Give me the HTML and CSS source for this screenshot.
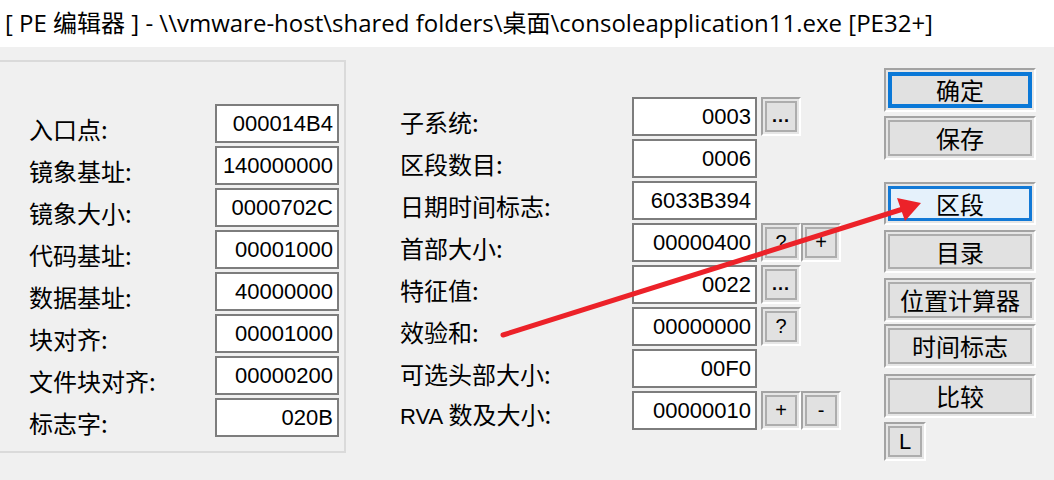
FILE: index.html
```html
<!DOCTYPE html>
<html lang="zh">
<head>
<meta charset="utf-8">
<link rel="stylesheet" href="styles.css">
</head>
<body>
<div class="title">[ PE 编辑器 ] - \\vmware-host\shared folders\桌面\consoleapplication11.exe [PE32+]</div>
<div class="main">
  <div class="group">
    <div class="rows">
      <div class="row"><span class="lbl">入口点:</span><span class="box">000014B4</span></div>
      <div class="row"><span class="lbl">镜象基址:</span><span class="box">140000000</span></div>
      <div class="row"><span class="lbl">镜象大小:</span><span class="box">0000702C</span></div>
      <div class="row"><span class="lbl">代码基址:</span><span class="box">00001000</span></div>
      <div class="row"><span class="lbl">数据基址:</span><span class="box">40000000</span></div>
      <div class="row"><span class="lbl">块对齐:</span><span class="box">00001000</span></div>
      <div class="row"><span class="lbl">文件块对齐:</span><span class="box">00000200</span></div>
      <div class="row"><span class="lbl">标志字:</span><span class="box">020B</span></div>
    </div>
  </div>
  <div class="mid">
    <div class="rows">
      <div class="row"><span class="lbl">子系统:</span><span class="box">0003</span><span class="sbtn"><span class="in dots">...</span></span></div>
      <div class="row"><span class="lbl">区段数目:</span><span class="box">0006</span></div>
      <div class="row"><span class="lbl">日期时间标志:</span><span class="box">6033B394</span></div>
      <div class="row"><span class="lbl">首部大小:</span><span class="box">00000400</span><span class="sbtn"><span class="in">?</span></span><span class="sbtn"><span class="in">+</span></span></div>
      <div class="row"><span class="lbl">特征值:</span><span class="box">0022</span><span class="sbtn"><span class="in dots">...</span></span></div>
      <div class="row"><span class="lbl">效验和:</span><span class="box">00000000</span><span class="sbtn"><span class="in">?</span></span></div>
      <div class="row"><span class="lbl">可选头部大小:</span><span class="box">00F0</span></div>
      <div class="row"><span class="lbl"><span><span class="lat">RVA</span> 数及大小:</span></span><span class="box">00000010</span><span class="sbtn"><span class="in">+</span></span><span class="sbtn"><span class="in">-</span></span></div>
    </div>
  </div>
  <div class="side">
    <div class="btn b1"><span class="in focus">确定</span></div>
    <div class="btn b2"><span class="in">保存</span></div>
    <div class="btn b3"><span class="in hot">区段</span></div>
    <div class="btn b4"><span class="in">目录</span></div>
    <div class="btn b5"><span class="in">位置计算器</span></div>
    <div class="btn b6"><span class="in">时间标志</span></div>
    <div class="btn b7"><span class="in">比较</span></div>
    <div class="btn b8"><span class="in lat">L</span></div>
  </div>
</div>
<svg class="arrow" width="1054" height="480" viewBox="0 0 1054 480">
  <line x1="503" y1="335" x2="903" y2="209" stroke="#ec2229" stroke-width="5" stroke-linecap="round"/>
  <polygon points="921,203 897,198 905,221" fill="#ec2229"/>
</svg>
</body>
</html>
```
FILE: styles.css
```css
html, body {
  margin: 0;
  padding: 0;
}
body {
  width: 1054px;
  height: 480px;
  overflow: hidden;
  background: #f0f0f0;
  font-family: "Noto Sans CJK SC", "Noto Sans", sans-serif;
  color: #000;
  position: relative;
}
.title {
  height: 47px;
  background: #fff;
  box-sizing: border-box;
  padding-left: 5px;
  font-family: "Open Sans", "Noto Sans CJK SC", sans-serif;
  font-size: 24px;
  line-height: 45px;
  white-space: nowrap;
}
.main {
  display: flex;
  padding-top: 13px;
}
.group {
  margin-left: -2px;
  width: 348px;
  height: 393px;
  box-sizing: border-box;
  border: 2px solid #dadada;
  padding: 42px 5px 0 29px;
}
.rows {
  display: flex;
  flex-direction: column;
  gap: 3px;
}
.row {
  display: flex;
  height: 39px;
}
.lbl {
  font-size: 24px;
  line-height: 24px;
  display: flex;
  align-items: center;
  box-sizing: border-box;
  padding-top: 10px;
  white-space: pre;
}
.group .lbl { width: 187px; }
.mid .lbl { width: 232px; }
.lat {
  font-family: "Liberation Sans", sans-serif;
  font-size: 22px;
}
.box {
  width: 125px;
  height: 39px;
  box-sizing: border-box;
  border: 2px solid #7d7d7d;
  background: #fff;
  font-family: "Liberation Sans", sans-serif;
  font-size: 22px;
  line-height: 35px;
  text-align: right;
  padding-right: 4px;
}
.mid {
  width: 538px;
  box-sizing: border-box;
  padding: 37px 0 0 54px;
}
.sbtn {
  width: 40px;
  height: 39px;
  box-sizing: border-box;
  border: 2px solid;
  border-color: #a3a3a3 #fff #fff #a3a3a3;
  padding: 2px;
  background: #e6e6e6;
  display: flex;
}
.mid .box + .sbtn { margin-left: 4px; }
.sbtn .in {
  flex: 1;
  border: 2px solid #adadad;
  background: #e1e1e1;
  display: flex;
  align-items: center;
  justify-content: center;
  font-family: "Liberation Sans", sans-serif;
  font-size: 20px;
}
.sbtn .in.dots {
  align-items: flex-end;
  line-height: 20px;
  padding-bottom: 4px;
  font-size: 18px;
  font-weight: bold;
  letter-spacing: 1px;
}
.side {
  width: 152px;
  padding-top: 8px;
  display: flex;
  flex-direction: column;
}
.btn {
  height: 44px;
  box-sizing: border-box;
  border: 2px solid;
  border-color: #a3a3a3 #fff #fff #a3a3a3;
  padding: 2px;
  background: #e6e6e6;
  display: flex;
}
.btn .in {
  flex: 1;
  border: 2px solid #adadad;
  background: #e1e1e1;
  display: flex;
  align-items: center;
  justify-content: center;
  font-size: 24px;
  line-height: 24px;
}
.btn .in.focus {
  border: 4px solid #0a78d7;
}
.btn .in.hot {
  border: 3px solid #1279d6;
  background: #e5f1fb;
}
.btn .in.lat {
  font-family: "Liberation Sans", sans-serif;
  font-size: 22px;
}
.b2 { margin-top: 4px; }
.b3 { margin-top: 22px; height: 43px; }
.b4 { margin-top: 5px; height: 43px; }
.b5 { margin-top: 5px; }
.b6 { margin-top: 2px; }
.b7 { margin-top: 6px; }
.b8 { margin-top: 4px; width: 42px; height: 39px; }
.arrow {
  position: absolute;
  left: 0;
  top: 0;
  pointer-events: none;
}
```
